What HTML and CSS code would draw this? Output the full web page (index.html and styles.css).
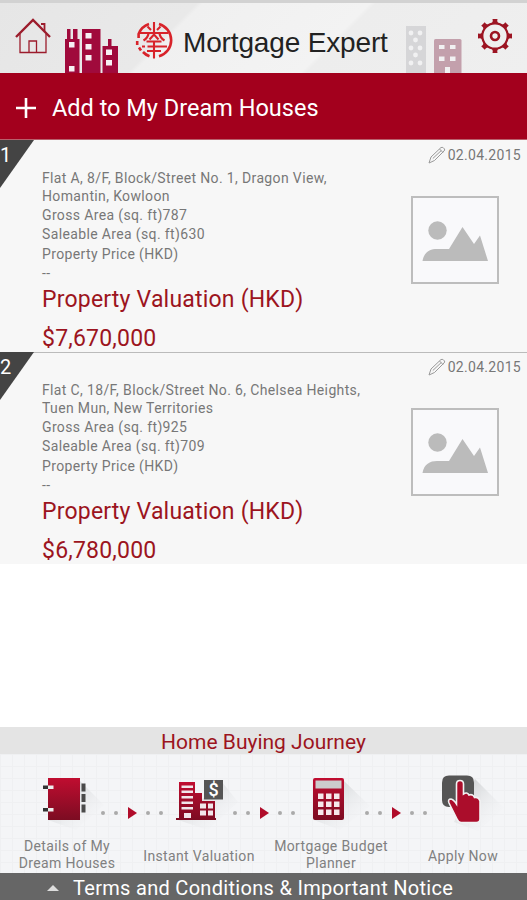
FILE: index.html
```html
<!DOCTYPE html>
<html lang="en">
<head>
    <meta charset="UTF-8">
    <title>Mortgage Expert</title>
    <link rel="stylesheet" href="styles.css">
</head>
<body>
    <div class="app">
        <header class="header">
            <svg class="home-icon" width="38" height="38" viewBox="0 0 38 38" fill="none" stroke="#9c1c2c">
                <path d="M2 20 L19 3 L36 20" stroke-width="2.400"/>
                <path d="M6 17 V35.500 H32 V17 M15 35 V24 H22.500 V35" stroke-width="1.300"/>
                <path d="M27 7 H30.500 V14" stroke-width="1.800"/>
            </svg>
            <svg class="towers" width="54" height="44" viewBox="0 0 54 44">
                <path fill="#a00a3c" d="M0 44 V10 H2 V0 H5.500 V10 H8 V0 H12.500 V10 H14.500 V44z M17 44 V0 H35.500 V44z M37.500 44 V17 H43 V10 H46.500 V17 H53 V44z"/>
                <path fill="#f6f0f3" d="M4 13h5.500v5.500H4z M4 37h5.500v5.500H4z M20.500 4h6v5.500h-6z M20.500 15h6v5.500h-6z M20.500 26h6v5.500h-6z M41 20.500h6v5.500h-6z M41 31h6v5.500h-6z"/>
            </svg>
            <svg class="logo" width="38" height="38" viewBox="0 0 38 38" fill="none" stroke="#d8232a">
                <path d="M14 3 A16.800 16.800 0 0 0 3.600 13 V17 M2.200 20 V24 M4 26.500 L6 29.500 M8 31 A16.800 16.800 0 0 0 14.500 35.300 M24 3 A16.800 16.800 0 0 1 24 35.300" stroke-width="2.600"/>
                <path d="M19 1 V12 M12.500 5.500 L16 9 M25.500 5.500 L22 9 M5 12 H33 M13.500 12.500 C13 16 11 18 8.500 19.500 M24.500 12.500 C25 16 27 18 29.500 19.500 M14.500 18.500 L19 13.500 L23.500 18.500 M11.500 20.500 H26.500 M7 25.500 H10 M12.500 25.500 H32 M12 30 H26 M19 20 V37.500" stroke-width="2.100"/>
            </svg>
            <h1>Mortgage Expert</h1>
            <svg class="towers-faded" width="56" height="47" viewBox="0 0 56 47">
                <path fill="#d6d6d8" d="M0 0H20V47H0z"/>
                <path fill="#c3a0ac" d="M28 47V14.500Q28 13 29.500 13H54Q55.500 13 55.500 14.500V47z"/>
                <g fill="#f1f1f2">
                    <circle cx="5" cy="7" r="2.400"/><circle cx="14" cy="7" r="2.400"/><circle cx="9.500" cy="14" r="2.400"/>
                    <circle cx="5" cy="22" r="2.400"/><circle cx="14" cy="22" r="2.400"/><circle cx="9.500" cy="29" r="2.400"/>
                    <circle cx="5" cy="37" r="2.400"/><circle cx="14" cy="37" r="2.400"/>
                    <path d="M33 19h5.500v4H33z M44 19h5.500v4H44z M33 30.500h5.500v4.500H33z M44 30.500h5.500v4.500H44z M39 41h5v6h-5z"/>
                </g>
            </svg>
            <svg class="gear-icon" width="36" height="36" viewBox="-18 -18 36 36" fill="none" stroke="#9c1422">
                <circle r="12.700" stroke-width="2.200"/>
                <circle r="4" stroke-width="2.600"/>
                <g fill="#9c1422" stroke="none">
                    <path id="tooth" d="M-3 -13 L-2.200 -15 L-2.500 -17 H2.500 L2.200 -15 L3 -13z"/>
                    <use href="#tooth" transform="rotate(45)"/>
                    <use href="#tooth" transform="rotate(90)"/>
                    <use href="#tooth" transform="rotate(135)"/>
                    <use href="#tooth" transform="rotate(180)"/>
                    <use href="#tooth" transform="rotate(225)"/>
                    <use href="#tooth" transform="rotate(270)"/>
                    <use href="#tooth" transform="rotate(315)"/>
                </g>
            </svg>
        </header>

        <div class="add-bar">
            <svg width="22" height="22" viewBox="0 0 22 22" stroke="#fff" stroke-width="2.600"><path d="M11 1V21M1 11H21"/></svg>
            <span>Add to My Dream Houses</span>
        </div>

        <section class="house">
            <div class="number"><span>1</span></div>
            <div class="details">
                <p class="address">Flat A, 8/F, Block/Street No. 1, Dragon View,<br>Homantin, Kowloon</p>
                <p>Gross Area (sq. ft)787</p>
                <p>Saleable Area (sq. ft)630</p>
                <p>Property Price (HKD)</p>
                <p>--</p>
                <p class="valuation">Property Valuation (HKD)</p>
                <p class="price">$7,670,000</p>
            </div>
            <div class="side">
                <div class="date">
                    <svg width="18" height="18" viewBox="0 0 18 18" fill="none" stroke="#999"><path d="M1 17 L3 11 L13 1.500 Q15 0.500 16.500 3 Q17 4 16 5 L6.500 14.500z M11.500 3 L15 6.500 M4.800 12.500 L13.300 4.500"/></svg>
                    <span>02.04.2015</span>
                </div>
                <svg class="photo" width="88" height="88" viewBox="0 0 88 88">
                    <path d="M1 1H87V87H1z" fill="#f9f9fb" stroke="#bdbdbd" stroke-width="2"/>
                    <circle cx="26.500" cy="34.500" r="9.200" fill="#bbb"/>
                    <path d="M11.500 65 C13 56 19 53 26 53 H38 L51.500 31 L63 48 L69 39.500 L77 65z" fill="#bbb"/>
                </svg>
            </div>
        </section>

        <section class="house">
            <div class="number"><span>2</span></div>
            <div class="details">
                <p class="address">Flat C, 18/F, Block/Street No. 6, Chelsea Heights,<br>Tuen Mun, New Territories</p>
                <p>Gross Area (sq. ft)925</p>
                <p>Saleable Area (sq. ft)709</p>
                <p>Property Price (HKD)</p>
                <p>--</p>
                <p class="valuation">Property Valuation (HKD)</p>
                <p class="price">$6,780,000</p>
            </div>
            <div class="side">
                <div class="date">
                    <svg width="18" height="18" viewBox="0 0 18 18" fill="none" stroke="#999"><path d="M1 17 L3 11 L13 1.500 Q15 0.500 16.500 3 Q17 4 16 5 L6.500 14.500z M11.500 3 L15 6.500 M4.800 12.500 L13.300 4.500"/></svg>
                    <span>02.04.2015</span>
                </div>
                <svg class="photo" width="88" height="88" viewBox="0 0 88 88">
                    <path d="M1 1H87V87H1z" fill="#f9f9fb" stroke="#bdbdbd" stroke-width="2"/>
                    <circle cx="26.500" cy="34.500" r="9.200" fill="#bbb"/>
                    <path d="M11.500 65 C13 56 19 53 26 53 H38 L51.500 31 L63 48 L69 39.500 L77 65z" fill="#bbb"/>
                </svg>
            </div>
        </section>

        <div class="bottom">
            <h2>Home Buying Journey</h2>
            <div class="journey">
                <div class="step">
                    <svg width="90" height="64" viewBox="0 0 90 64">
                        <defs>
                            <linearGradient id="red" x1="0" y1="0" x2="0" y2="1">
                                <stop offset="0" stop-color="#c00d30"/>
                                <stop offset="1" stop-color="#7c0c22"/>
                            </linearGradient>
                            <linearGradient id="shade" x1="0" y1="0" x2="1" y2="1">
                                <stop offset="0.200" stop-color="#d4d6d8"/>
                                <stop offset="0.900" stop-color="#f4f5f7" stop-opacity="0"/>
                            </linearGradient>
                        </defs>
                        <path d="M58 13 L82 37 L54 62 L26 52z" fill="url(#shade)"/>
                        <path d="M26 10H58V52H26z" fill="url(#red)"/>
                        <path d="M59.500 15.500h4v8h-4z M59.500 26h4v8h-4z M59.500 36.500h4v8h-4z" fill="#4a4a4a"/>
                        <path d="M21 17.500h5v3.500h-5z M21 40h5v3.500h-5z" fill="#333"/>
                        <path d="M26 17.500h5.500v3.500h-5.500z M26 40h5.500v3.500h-5.500z" fill="#eee"/>
                    </svg>
                    <div class="label"><span>Details of My<br>Dream Houses</span></div>
                </div>
                <div class="dots"><i></i><i></i><b></b><i></i><i></i></div>
                <div class="step">
                    <svg width="90" height="64" viewBox="0 0 90 64">
                        <path d="M68 14 L84 34 L54 62 L24 52z" fill="url(#shade)"/>
                        <path d="M22 50h3V14h16v11h7v8h13v17h1v2H22z" fill="url(#red)"/>
                        <path d="M27.500 17.500h11.500v2.500h-11.500z M27.500 22.500h11.500v2.500h-11.500z M27.500 28h11.500v2.500h-11.500z M27.500 33.500h11.500v2.500h-11.500z M27.500 39h11.500v2.500h-11.500z M30 45h7v5h-7z M46 35.500h6v5h-6z M54 35.500h5v5h-5z M46 42.500h6v5h-6z M54 42.500h5v5h-5z" fill="#f1e6ea"/>
                        <path d="M50 12H69V31.500H50z" fill="#555"/>
                        <text x="59.500" y="28" class="dollar">$</text>
                    </svg>
                    <div class="label single"><span>Instant Valuation</span></div>
                </div>
                <div class="dots"><i></i><i></i><b></b><i></i><i></i></div>
                <div class="step">
                    <svg width="90" height="64" viewBox="0 0 90 64">
                        <path d="M58 13 L84 38 L54 62 L28 52z" fill="url(#shade)"/>
                        <rect x="27" y="10" width="31" height="42" rx="2" fill="url(#red)"/>
                        <path d="M29.500 12.500H55.500V20.500H29.500z" fill="#ccc"/>
                        <path d="M32 25.500h5.500v5.500H32z M40 25.500h5.500v5.500H40z M48 25.500h5.500v5.500H48z M32 33.500h5.500v5.500H32z M40 33.500h5.500v5.500H40z M48 33.500h5.500v5.500H48z M32 41.500h5.500v5.500H32z M40 41.500h5.500v5.500H40z M48 41.500h5.500v5.500H48z" fill="#f6e9ec"/>
                    </svg>
                    <div class="label"><span>Mortgage Budget<br>Planner</span></div>
                </div>
                <div class="dots"><i></i><i></i><b></b><i></i><i></i></div>
                <div class="step">
                    <svg width="90" height="64" viewBox="0 0 90 64">
                        <path d="M57 11 L86 40 L60 63 L36 54z" fill="url(#shade)"/>
                        <path d="M31 7.500H49Q56 7.500 56 14.500V32Q56 39 49 39H31Q24 39 24 32V14.500Q24 7.500 31 7.500z" fill="#555"/>
                        <path d="M38.500 36 V16 Q38.500 12.500 42 12.500 Q45.500 12.500 45.500 16 V26 Q49 23.500 51 27 Q55 25.500 56.500 29.500 Q60.500 28.500 62 33 V51 Q62 54.500 58.500 54.500 H43 Q40.500 54.500 39 51 L31 35 Q29.500 31 33 31 Q35.500 31.500 38.500 36z" fill="#ab0d2b" stroke="#f2f2f3" stroke-width="1.600"/>
                    </svg>
                    <div class="label single"><span>Apply Now</span></div>
                </div>
            </div>
            <footer class="terms">
                <span class="arrow"></span>
                <span>Terms and Conditions &amp; Important Notice</span>
            </footer>
        </div>
    </div>
</body>
</html>
```
FILE: styles.css
```css
* {
    box-sizing: border-box;
}

body {
    font-family: Roboto, "Liberation Sans", sans-serif;
    background: #fff;
    margin: 0;
}

h1, h2, p {
    margin: 0;
    font-weight: 400;
}

svg {
    display: block;
    flex: none;
}

.app {
    width: 527px;
    height: 900px;
    display: flex;
    flex-direction: column;
    overflow: hidden;
    white-space: nowrap;
}

.header {
    height: 73px;
    display: flex;
    align-items: flex-start;
    padding: 0 14px;
    border-top: 3px solid #d2d2d2;
    background: linear-gradient(135deg, #e6e6e6 0%, #e9e9e9 33%, #f0f0f0 34%, #f3f3f3 62%, #ededed 63%, #efefef 100%);
}

.home-icon {
    margin-top: 14px;
}

.towers {
    margin: 26px 0 0 13px;
}

.logo {
    margin: 18px 0 0 16px;
}

.header h1 {
    width: 206px;
    margin: 23px 0 0 10px;
    font-family: "Liberation Sans", Arial, sans-serif;
    font-size: 28px;
    line-height: 34px;
    letter-spacing: -0.15px;
    color: #222;
}

.towers-faded {
    margin: 23px 0 0 18px;
}

.gear-icon {
    margin: 15px 0 0 15.5px;
}

.add-bar {
    height: 67px;
    display: flex;
    align-items: center;
    gap: 15px;
    padding: 3px 15px 0;
    background: #a3001d;
    border-bottom: 1px solid #b8606c;
    color: #fff;
    font-size: 23.5px;
}

.house {
    height: 212px;
    display: flex;
    background: #f7f7f7;
}

.house + .house {
    box-shadow: inset 0 1px #bbb;
}

.number {
    width: 34px;
    height: 48px;
    background: #444;
    clip-path: polygon(0 0, 100% 0, 0 100%);
    color: #fff;
    font-size: 20px;
    line-height: 31px;
}

.details {
    width: 350px;
    padding: 30px 0 0 8px;
    font-size: 14px;
    line-height: 19.4px;
    letter-spacing: 0.36px;
    color: #777;
}

.details .address {
    line-height: 17.5px;
    padding-bottom: 1px;
}

.details .valuation {
    font-size: 23px;
    line-height: 39px;
    letter-spacing: 0.2px;
    margin-top: -4px;
    color: #9c1420;
}

.details .price {
    font-size: 23px;
    line-height: 39px;
    letter-spacing: 0.2px;
    color: #9c1420;
}

.side {
    flex: 1;
    display: flex;
    flex-direction: column;
    align-items: flex-end;
    padding: 6px 6px 0 0;
}

.date {
    display: flex;
    align-items: center;
    gap: 2px;
    font-size: 14px;
    letter-spacing: 0.3px;
    color: #777;
}

.photo {
    margin: 32px 22.5px 0 0;
}

.bottom {
    margin-top: auto;
}

.bottom h2 {
    height: 27px;
    background: #e4e4e4;
    color: #9c1420;
    font-size: 21px;
    line-height: 31px;
    text-align: center;
}

.journey {
    height: 119px;
    display: flex;
    padding: 14px 0 0 22px;
    background-color: #f4f5f7;
    background-image: linear-gradient(#eff0f2 1px, transparent 1px), linear-gradient(90deg, #eff0f2 1px, transparent 1px);
    background-size: 12px 12px;
}

.step {
    width: 90px;
    flex: none;
}

.label {
    height: 40px;
    display: flex;
    justify-content: center;
    align-items: center;
    margin: 3px -15px 0;
    font-size: 14px;
    line-height: 17px;
    letter-spacing: 0.36px;
    text-align: center;
    color: #808080;
}

.label.single {
    margin-top: 4px;
}

.dots {
    width: 62px;
    height: 12px;
    flex: none;
    display: flex;
    align-items: center;
    justify-content: space-between;
    margin: 39px -9px 0 -11px;
}

.dots i {
    width: 4px;
    height: 4px;
    border-radius: 50%;
    background: #aaa;
}

.dots b {
    border-left: 9px solid #b00c2a;
    border-top: 6px solid transparent;
    border-bottom: 6px solid transparent;
}

.terms {
    height: 27px;
    display: flex;
    align-items: center;
    gap: 14px;
    padding: 2px 0 0 47px;
    background: #666;
    color: #fff;
    font-size: 20px;
    letter-spacing: 0.3px;
}

.arrow {
    border-left: 6px solid transparent;
    border-right: 6px solid transparent;
    border-bottom: 6px solid #ddd;
}

.dollar {
    font-size: 18px;
    font-weight: 500;
    text-anchor: middle;
    fill: #fff;
}
```
